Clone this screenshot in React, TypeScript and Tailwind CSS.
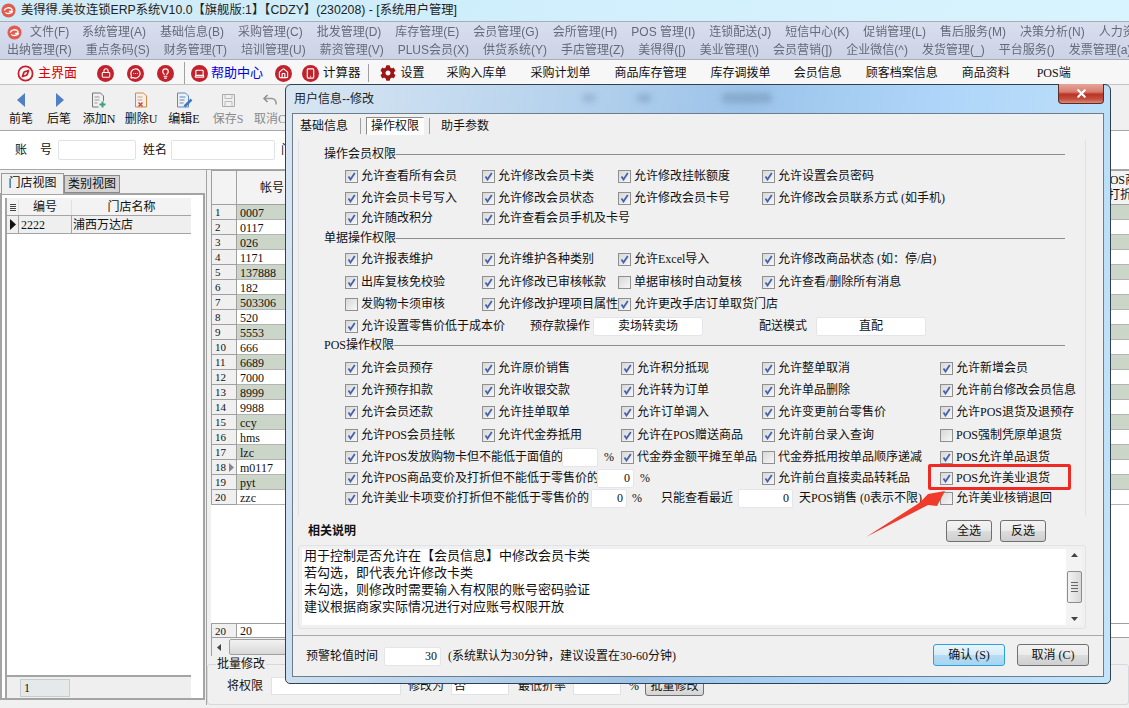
import { Compass, Lock, MessageCircleMore, Lightbulb, Laptop, House, Smartphone, X } from 'lucide-react'
import { FaCog } from 'react-icons/fa'
import type { ReactNode } from 'react'

const menuRow1 = ['系统管理(A)', '基础信息(B)', '采购管理(C)', '批发管理(D)', '库存管理(E)', '会员管理(G)', '会所管理(H)', 'POS 管理(I)', '连锁配送(J)', '短信中心(K)', '促销管理(L)', '售后服务(M)', '决策分析(N)', '人力资源(O)']
const menuRow2 = ['出纳管理(R)', '重点条码(S)', '财务管理(T)', '培训管理(U)', '薪资管理(V)', 'PLUS会员(X)', '供货系统(Y)', '手店管理(Z)', '美得得([)', '美业管理(\\)', '会员营销(])', '企业微信(^)', '发货管理(_)', '平台服务()', '发票管理(a)']
const accounts = ['0007', '0117', '026', '1171', '137888', '182', '503306', '520', '5553', '666', '6689', '7000', '8999', '9988', 'ccy', 'hms', 'lzc', 'm0117', 'pyt', 'zzc']

function Logo({ size = 16 }: { size?: number }) {
  return (
    <svg width={size} height={size} viewBox="0 0 16 16" className="shrink-0">
      <circle cx="8" cy="8" r="7.5" fill="#e25b4e" />
      <path d="M3.5 8c1-3 6-4 8-1.5 1 1.5-1 3-3 2.5M12.5 8.5c-1 3-6 3.5-8 1.5" stroke="#fff" strokeWidth="1.5" fill="none" />
    </svg>
  )
}

function RedIcon({ children, className }: { children: ReactNode; className?: string }) {
  return (
    <span className={`flex h-[17px] w-[17px] shrink-0 items-center justify-center rounded-full bg-[#c2222c] text-white ${className ?? ''}`}>
      {children}
    </span>
  )
}

function Tool({ label, icon, width, off }: { label: string; icon: ReactNode; width: string; off?: boolean }) {
  return (
    <div className={`flex flex-col items-center ${width} ${off ? 'text-[#8a8a8a]' : 'text-[#111]'}`}>
      <div className="flex h-[18px] items-center">{icon}</div>
      <span className="mt-[3px] text-[12px] leading-[14px]">{label}</span>
    </div>
  )
}

function Check({ on = true }: { on?: boolean }) {
  return (
    <span className="flex h-[13px] w-[13px] shrink-0 items-center justify-center border border-[#8e8f8f] bg-gradient-to-br from-[#d8d8d8] to-[#f7f7f7]">
      {on && (
        <svg width="9" height="9" viewBox="0 0 9 9">
          <path d="M1.5 4.5 L3.5 7.5 L7.8 1" stroke="#4661ad" strokeWidth="1.8" fill="none" />
        </svg>
      )}
    </span>
  )
}

function Opt({ label, on = true, w }: { label: string; on?: boolean; w: string }) {
  return (
    <div className={`flex shrink-0 items-center gap-[3px] whitespace-nowrap ${w}`}>
      <Check on={on} />
      <span>{label}</span>
    </div>
  )
}

function Field({ value = '', w, center }: { value?: string; w: string; center?: boolean }) {
  return (
    <div className={`flex h-[19px] shrink-0 items-center rounded-[2px] border border-[#e3e5ea] bg-white px-[3px] ${center ? 'justify-center' : 'justify-end'} ${w}`}>
      {value}
    </div>
  )
}

function Heading({ label, className }: { label: string; className?: string }) {
  return (
    <div className={`flex h-[20px] items-center pr-[20px] ${className ?? ''}`}>
      <span className="whitespace-nowrap">{label}</span>
      <span className="h-px flex-1 bg-[#8c8c8c]" />
    </div>
  )
}

function Row({ children, className }: { children: ReactNode; className?: string }) {
  return <div className={`flex h-[20px] items-center pl-[21px] ${className ?? ''}`}>{children}</div>
}

function WinButton({ label, w, primary }: { label: string; w: string; primary?: boolean }) {
  return (
    <button
      type="button"
      className={`flex h-[22px] items-center justify-center rounded-[3px] border ${w} ${
        primary
          ? 'border-[#2f9fe0] bg-[linear-gradient(#e8f5fc_0%,#d6edfa_48%,#b5dcf3_52%,#a6d5f0_100%)]'
          : 'border-[#707070] bg-[linear-gradient(#f3f3f3_0%,#ebebeb_48%,#dcdcdc_52%,#cfcfcf_100%)]'
      }`}
    >
      {label}
    </button>
  )
}

function Dialog() {
  return (
    <div className="absolute left-[285px] top-[84px] flex h-[600px] w-[826px] flex-col rounded-t-[6px] rounded-b-[5px] border border-[#33404e] bg-[linear-gradient(100deg,#d9e6f2_0%,#bcd6ee_25%,#9cc3e9_50%,#aed5f9_70%,#c3e4f9_100%)] px-[6px] pb-[6px] font-['Liberation_Serif','Noto_Sans_CJK_SC',serif] text-[12px] text-[#111]">
      <div className="relative h-[28px] shrink-0">
        <span className="absolute left-[2px] top-[6px] font-['Liberation_Sans','Noto_Sans_CJK_SC',sans-serif] text-[12px] leading-[16px] text-[#222]">用户信息--修改</span>
        <span className="absolute left-[430px] top-[8px] h-[10px] w-[50px] rounded bg-[#6f8fb0] opacity-50 blur-[3px]" />
        <span className="absolute left-[345px] top-[9px] h-[8px] w-[14px] rounded bg-[#6f8fb0] opacity-50 blur-[3px]" />
        <span className="absolute left-[290px] top-[9px] h-[8px] w-[14px] rounded bg-[#6f8fb0] opacity-40 blur-[3px]" />
        <div className="absolute right-0 top-[-1px] flex h-[20px] w-[46px] items-center justify-center rounded-b-[4px] border border-[#5b2b26] border-t-0 bg-[linear-gradient(#e5a69c_0%,#d97f70_40%,#b93426_55%,#c4503f_80%,#dc8a7c_100%)]">
          <X size={13} strokeWidth={4} className="text-white" />
        </div>
      </div>

      <div className="flex flex-1 flex-col border border-[#6e7d8a] bg-[#f0f0f0]">
        {/* tabs */}
        <div className="flex h-[25px] shrink-0 items-center pb-[2px] pl-[7px] text-[12px]">
          <span className="w-[48px]">基础信息</span>
          <span className="ml-[12px] h-[16px] w-px bg-[#a0a0a0]" />
          <span className="ml-[5px] flex h-[18px] w-[58px] items-center justify-center border border-[#8a8a8a] border-b-white border-r-white bg-white">操作权限</span>
          <span className="ml-[5px] h-[16px] w-px bg-[#a0a0a0]" />
          <span className="ml-[11px]">助手参数</span>
        </div>

        {/* permissions */}
        <div className="mx-[5px] flex h-[377px] w-[788px] shrink-0 flex-col whitespace-nowrap border-x border-[#dfe3e8] pl-[25px]">
          <Heading label="操作会员权限" className="mt-[5px]" />
          <Row className="mt-[2px]">
            <Opt w="w-[137px]" label="允许查看所有会员" />
            <Opt w="w-[136px]" label="允许修改会员卡类" />
            <Opt w="w-[144px]" label="允许修改挂帐额度" />
            <Opt w="w-[180px]" label="允许设置会员密码" />
          </Row>
          <Row className="mt-[2px]">
            <Opt w="w-[137px]" label="允许会员卡号写入" />
            <Opt w="w-[136px]" label="允许修改会员状态" />
            <Opt w="w-[144px]" label="允许修改会员卡号" />
            <Opt w="w-[240px]" label="允许修改会员联系方式 (如手机)" />
          </Row>
          <Row>
            <Opt w="w-[137px]" label="允许随改积分" />
            <Opt w="w-[136px]" label="允许查看会员手机及卡号" />
          </Row>
          <Heading label="单据操作权限" />
          <Row className="mt-px">
            <Opt w="w-[137px]" label="允许报表维护" />
            <Opt w="w-[136px]" label="允许维护各种类别" />
            <Opt w="w-[144px]" label="允许Excel导入" />
            <Opt w="w-[240px]" label="允许修改商品状态 (如：停/启)" />
          </Row>
          <Row className="mt-[3px]">
            <Opt w="w-[137px]" label="出库复核免校验" />
            <Opt w="w-[136px]" label="允许修改已审核帐款" />
            <Opt w="w-[144px]" on={false} label="单据审核时自动复核" />
            <Opt w="w-[240px]" label="允许查看/删除所有消息" />
          </Row>
          <Row className="mt-[2px]">
            <Opt w="w-[137px]" on={false} label="发购物卡须审核" />
            <Opt w="w-[136px]" label="允许修改护理项目属性" />
            <Opt w="w-[180px]" label="允许更改手店订单取货门店" />
          </Row>
          <Row className="mt-[2px]">
            <Opt w="w-[185px]" label="允许设置零售价低于成本价" />
            <span className="w-[63px]">预存款操作</span>
            <Field w="w-[110px]" value="卖场转卖场" center />
            <span className="ml-[56px] w-[57px]">配送模式</span>
            <Field w="w-[110px]" value="直配" center />
          </Row>
          <Heading label="POS操作权限" className="-mt-px" />
          <Row className="mt-[3px]">
            <Opt w="w-[137px]" label="允许会员预存" />
            <Opt w="w-[139px]" label="允许原价销售" />
            <Opt w="w-[141px]" label="允许积分抵现" />
            <Opt w="w-[178px]" label="允许整单取消" />
            <Opt w="w-[120px]" label="允许新增会员" />
          </Row>
          <Row className="mt-[2px]">
            <Opt w="w-[137px]" label="允许预存扣款" />
            <Opt w="w-[139px]" label="允许收银交款" />
            <Opt w="w-[141px]" label="允许转为订单" />
            <Opt w="w-[178px]" label="允许单品删除" />
            <Opt w="w-[120px]" label="允许前台修改会员信息" />
          </Row>
          <Row className="mt-[2px]">
            <Opt w="w-[137px]" label="允许会员还款" />
            <Opt w="w-[139px]" label="允许挂单取单" />
            <Opt w="w-[141px]" label="允许订单调入" />
            <Opt w="w-[178px]" label="允许变更前台零售价" />
            <Opt w="w-[120px]" label="允许POS退货及退预存" />
          </Row>
          <Row className="mt-[3px]">
            <Opt w="w-[137px]" label="允许POS会员挂帐" />
            <Opt w="w-[139px]" label="允许代金券抵用" />
            <Opt w="w-[141px]" label="允许在POS赠送商品" />
            <Opt w="w-[178px]" label="允许前台录入查询" />
            <Opt w="w-[120px]" on={false} label="POS强制凭原单退货" />
          </Row>
          <Row className="mt-[2px]">
            <Opt w="w-[217px]" label="允许POS发放购物卡但不能低于面值的" />
            <Field w="w-[36px]" />
            <span className="ml-[6px] w-[17px]">%</span>
            <Opt w="w-[141px]" label="代金券金额平摊至单品" />
            <Opt w="w-[178px]" on={false} label="代金券抵用按单品顺序递减" />
            <Opt w="w-[120px]" label="POS允许单品退货" />
          </Row>
          <Row className="mt-px">
            <Opt w="w-[252px]" label="允许POS商品变价及打折但不能低于零售价的" />
            <Field w="w-[37px]" value="0" />
            <span className="ml-[6px] w-[122px]">%</span>
            <Opt w="w-[178px]" label="允许前台直接卖品转耗品" />
            <Opt w="w-[120px]" label="POS允许美业退货" />
          </Row>
          <Row>
            <Opt w="w-[246px]" label="允许美业卡项变价打折但不能低于零售价的" />
            <Field w="w-[36px]" value="0" />
            <span className="ml-[5px] w-[29px]">%</span>
            <span className="w-[77px]">只能查看最近</span>
            <Field w="w-[55px]" value="0" />
            <span className="ml-[6px] w-[141px]">天POS销售 (0表示不限)</span>
            <Opt w="w-[120px]" on={false} label="允许美业核销退回" />
          </Row>
        </div>

        {/* description */}
        <div className="flex h-[29px] shrink-0 items-center pl-[15px] pr-[57px]">
          <span className="flex-1 font-bold">相关说明</span>
          <WinButton label="全选" w="w-[46px]" />
          <WinButton label="反选" w="ml-[8px] w-[46px]" />
        </div>
        <div className="mx-[5px] flex h-[84px] w-[788px] shrink-0 rounded-[3px] border border-[#dfe3e8] p-[3px]">
          <div className="flex-1 bg-white pl-[2px] text-[13px] leading-[17px]">
            <div className="-mt-[2px]">
              <p>用于控制是否允许在【会员信息】中修改会员卡类</p>
              <p>若勾选，即代表允许修改卡类</p>
              <p>未勾选，则修改时需要输入有权限的账号密码验证</p>
              <p>建议根据商家实际情况进行对应账号权限开放</p>
            </div>
          </div>
          <div className="flex w-[16px] flex-col items-center justify-between bg-[#f3f3f3] py-[4px]">
            <svg width="7" height="4" viewBox="0 0 7 4"><path d="M3.5 0 L7 4 L0 4Z" fill="#444" /></svg>
            <div className="flex h-[32px] w-[15px] flex-col items-center justify-center gap-[2px] rounded-[2px] border border-[#8d8d8d] bg-gradient-to-r from-[#f2f2f2] to-[#d8d8d8]">
              <span className="h-px w-[7px] bg-[#666]" />
              <span className="h-px w-[7px] bg-[#666]" />
              <span className="h-px w-[7px] bg-[#666]" />
              <span className="h-px w-[7px] bg-[#666]" />
            </div>
            <svg width="7" height="4" viewBox="0 0 7 4"><path d="M0 0 L7 0 L3.5 4Z" fill="#444" /></svg>
          </div>
        </div>

        {/* footer */}
        <div className="mt-[6px] flex flex-1 items-center border-t border-[#a8a8a8] pl-[13px] pr-[14px]">
          <span className="w-[78px]">预警轮值时间</span>
          <Field w="w-[57px]" value="30" />
          <span className="ml-[7px] flex-1">(系统默认为30分钟，建议设置在30-60分钟)</span>
          <WinButton label="确认 (S)" w="-mt-[2px] w-[72px]" primary />
          <WinButton label="取消 (C)" w="-mt-[2px] ml-[12px] w-[72px]" />
        </div>
      </div>
    </div>
  )
}

export default function App() {
  return (
    <div className="relative flex h-[708px] w-[1129px] flex-col overflow-hidden bg-[#f0f0f0] font-['Liberation_Serif','Noto_Sans_CJK_SC',serif] text-[12px] text-[#111]">
      {/* title bar */}
      <div className="flex h-[21px] shrink-0 items-center gap-[5px] bg-[linear-gradient(100deg,#d2eaf6_0%,#cfeefc_40%,#d4f1fd_70%,#d8f4fe_100%)] pl-px font-['Liberation_Sans','Noto_Sans_CJK_SC',sans-serif] text-[#222]">
        <Logo size={15} />
        <span className="whitespace-nowrap text-[12.3px]">美得得.美妆连锁ERP系统V10.0【旗舰版:1】【CDZY】(230208) - [系统用户管理]</span>
      </div>

      {/* menu */}
      <div className="flex h-[39px] shrink-0 flex-col overflow-hidden border-y border-[#a8aeb8] bg-[linear-gradient(#d9deef,#ccd3e6)] pt-px font-['Liberation_Sans','Noto_Sans_CJK_SC',sans-serif] text-[#666a78]">
        <div className="flex h-[18px] items-center whitespace-nowrap pl-[7px]">
          <Logo size={15} />
          <span className="ml-[8px] w-[52px] shrink-0 blur-[0.3px]">文件(F)</span>
          {menuRow1.map(m => (
            <span key={m} className="mr-[14px] shrink-0 blur-[0.3px]">{m}</span>
          ))}
        </div>
        <div className="flex h-[18px] items-center gap-[14px] whitespace-nowrap pl-[7px]">
          {menuRow2.map(m => (
            <span key={m} className="shrink-0 blur-[0.3px]">{m}</span>
          ))}
        </div>
      </div>

      {/* shortcut bar */}
      <div className="flex h-[25px] shrink-0 items-center whitespace-nowrap border-b border-[#c4c4c4] bg-[#f7f7f7] pt-[2px]">
        <Compass size={17} strokeWidth={2.5} className="ml-[17px] text-[#c2222c]" />
        <span className="ml-[4px] text-[13px] text-[#e00000]">主界面</span>
        <RedIcon className="ml-[20px]"><Lock size={10} strokeWidth={2.5} /></RedIcon>
        <RedIcon className="ml-[13px]"><MessageCircleMore size={11} strokeWidth={2.5} /></RedIcon>
        <RedIcon className="ml-[13px]"><Lightbulb size={11} strokeWidth={2.5} /></RedIcon>
        <span className="ml-[10px] h-[22px] w-px bg-[#a0a0a0]" />
        <RedIcon className="ml-[6px]"><Laptop size={11} strokeWidth={2.5} /></RedIcon>
        <span className="ml-[3px] text-[13px] text-[#0000e6]">帮助中心</span>
        <RedIcon className="ml-[12px]"><House size={11} strokeWidth={2.5} /></RedIcon>
        <RedIcon className="ml-[10px]"><Smartphone size={11} strokeWidth={2.5} /></RedIcon>
        <span className="ml-[4px] text-[12.5px]">计算器</span>
        <span className="ml-[7px] h-[18px] w-px bg-[#a0a0a0]" />
        <FaCog size={16} className="ml-[11px] text-[#9c1616]" />
        <span className="ml-[5px]">设置</span>
        <span className="ml-[22px]">采购入库单</span>
        <span className="ml-[24px]">采购计划单</span>
        <span className="ml-[24px]">商品库存管理</span>
        <span className="ml-[24px]">库存调拨单</span>
        <span className="ml-[23px]">会员信息</span>
        <span className="ml-[24px]">顾客档案信息</span>
        <span className="ml-[24px]">商品资料</span>
        <span className="ml-[27px]">POS端</span>
      </div>

      {/* record toolbar */}
      <div className="flex h-[45px] shrink-0 items-start pt-[6px]">
        <Tool width="ml-px w-[40px]" label="前笔" icon={<svg width="9" height="14" viewBox="0 0 9 14"><path d="M8 0 L0 7 L8 14Z" fill="#4f7fc4" /></svg>} />
        <Tool width="w-[36px]" label="后笔" icon={<svg width="9" height="14" viewBox="0 0 9 14"><path d="M1 0 L9 7 L1 14Z" fill="#4f7fc4" /></svg>} />
        <Tool width="w-[44px]" label="添加N" icon={
          <svg width="16" height="17" viewBox="0 0 16 17" fill="none">
            <path d="M1.5 1h8l3 3v5M1.5 1v14h6" stroke="#777" />
            <path d="M3.5 5h5M3.5 8h5M3.5 11h3" stroke="#999" />
            <path d="M11.5 9.5v6M8.5 12.5h6" stroke="#3f9e7c" strokeWidth="2" />
          </svg>
        } />
        <Tool width="w-[40px]" label="删除U" icon={
          <svg width="15" height="17" viewBox="0 0 15 17" fill="none">
            <path d="M1.5 1h8l3 3v11h-11z" stroke="#d9883c" />
            <path d="M3.5 5h5M3.5 8h5" stroke="#d9a070" />
            <path d="M4.5 10.5l4 4M8.5 10.5l-4 4" stroke="#d8352a" strokeWidth="1.3" />
          </svg>
        } />
        <Tool width="w-[46px]" label="编辑E" icon={
          <svg width="17" height="17" viewBox="0 0 17 17" fill="none">
            <path d="M1.5 1h8l3 3v11h-11z" stroke="#5a8ac6" />
            <path d="M3.5 5h6M3.5 8h5M3.5 11h4" stroke="#5a8ac6" />
            <path d="M8.5 14.5l7-7" stroke="#3f78c0" strokeWidth="2.5" />
          </svg>
        } />
        <Tool width="w-[42px]" off label="保存S" icon={
          <svg width="15" height="15" viewBox="0 0 15 15" fill="none">
            <path d="M1.5 1.5h12v12h-12z" stroke="#aaa" />
            <path d="M4 1.5v4h7v-4M4 13.5v-5h7v5" stroke="#bbb" />
          </svg>
        } />
        <Tool width="w-[42px]" off label="取消C" icon={
          <svg width="15" height="13" viewBox="0 0 15 13" fill="none">
            <path d="M4.5 1L1 4.5 4.5 8" stroke="#888" strokeWidth="1.5" />
            <path d="M1.5 4.5h7c3 0 5 2 4.5 6" stroke="#999" strokeWidth="1.5" />
          </svg>
        } />
      </div>

      {/* search row */}
      <div className="flex h-[40px] shrink-0 items-center whitespace-nowrap border-y border-[#a8a8a8] bg-white">
        <span className="ml-[15px] flex w-[37px] justify-between"><span>账</span><span>号</span></span>
        <div className="ml-[6px] h-[20px] w-[78px] rounded-[2px] border border-[#dfe3e8]" />
        <span className="ml-[7px] w-[28px]">姓名</span>
        <div className="h-[20px] w-[104px] rounded-[2px] border border-[#dfe3e8]" />
        <span className="ml-[6px]">门店</span>
      </div>

      {/* body */}
      <div className="flex min-h-0 flex-1 border-b-[3px] border-[#f0f0f0]">
        {/* store panel */}
        <div className="flex w-[205px] shrink-0 flex-col">
          <div className="flex h-[23px] shrink-0 items-end pl-px">
            <span className="z-10 -mb-px flex h-[21px] w-[63px] items-center justify-center border border-b-0 border-[#9a9a9a] bg-[#f0f0f0] pb-[2px]">门店视图</span>
            <span className="flex h-[18px] w-[56px] items-center justify-center border border-[#8a8a8a] bg-[#d4d4d4]">类别视图</span>
          </div>
          <div className="mb-[5px] flex flex-1 flex-col border-2 border-[#a4a4a4] bg-white pl-[3px] pt-[3px]">
            <div className="flex h-[17px] w-[186px] shrink-0 border-l-2 border-[#a4a4a4] bg-[#f3f3f3] pt-[2px] text-center leading-[15px]">
              <span className="flex w-[11px] flex-col items-center justify-center gap-px">
                <i className="h-px w-[6px] bg-[#444]" />
                <i className="h-px w-[6px] bg-[#444]" />
                <i className="h-px w-[6px] bg-[#444]" />
                <i className="h-px w-[6px] bg-[#444]" />
              </span>
              <span className="w-[53px] border-l border-[#e0e0e0]">编号</span>
              <span className="flex-1 border-l border-[#e0e0e0]">门店名称</span>
            </div>
            <div className="flex h-[19px] w-[186px] shrink-0 items-center border-b border-l-2 border-t border-[#a4a4a4] bg-[#efefef] text-[12px]">
              <span className="flex w-[11px] justify-center">
                <svg width="6" height="11" viewBox="0 0 6 11"><path d="M0 0 L6 5.5 L0 11Z" fill="#111" /></svg>
              </span>
              <span className="flex h-full w-[53px] items-center border-l border-[#a4a4a4] pl-[2px]">2222</span>
              <span className="flex h-full flex-1 items-center border-l border-[#a4a4a4] pl-px">浦西万达店</span>
            </div>
            <div className="w-[186px] flex-1 border-l-2 border-[#a4a4a4]" />
            <div className="flex h-[23px] w-[186px] shrink-0 items-center border-l-2 border-t-2 border-[#a4a4a4] bg-[#efefef] pl-[13px]">
              <span className="flex h-[18px] w-[50px] items-center border border-[#c8cccc] bg-[#e6e9e9] pl-[3px]">1</span>
            </div>
          </div>
        </div>

        {/* splitter */}
        <div className="flex w-[6px] shrink-0 justify-start pl-px">
          <span className="w-px bg-[#a4a4a4]" />
        </div>

        {/* user grid */}
        <div className="flex min-w-0 flex-1 flex-col bg-white">
          <div className="flex h-[35px] shrink-0 border-b border-t border-[#a0a0a0] bg-[#f3f3f3]">
            <span className="w-[26px] border-l border-r border-[#a0a0a0]" />
            <span className="flex w-[60px] items-center justify-center pl-[10px]">帐号</span>
            <span className="flex-1" />
            <span className="flex w-[18px] flex-col items-center justify-center whitespace-nowrap leading-[15px]">
              <span>POS商</span>
              <span>打折</span>
            </span>
          </div>
          {accounts.map((a, i) => (
            <div key={a} className={`flex h-[15px] shrink-0 leading-[16px] ${i % 2 === 0 ? 'bg-[#cbd6c8]' : 'bg-white'}`}>
              <span className="flex w-[26px] items-center border-b border-l border-r border-[#a0a0a0] bg-[#f0f0f0] pl-[3px] text-[11px]">
                {i + 1}
                {a === 'm0117' && (
                  <svg width="5" height="9" viewBox="0 0 5 9" className="ml-[3px]"><path d="M0 0 L5 4.5 L0 9Z" fill="#888" /></svg>
                )}
              </span>
              <span className="flex-1 border-b border-[#b4b4b4] pl-[3px]">{a}</span>
            </div>
          ))}
          <div className="flex-1" />
          <div className="flex h-[15px] shrink-0 border-y border-[#a0a0a0] leading-[14px]">
            <span className="w-[26px] border-x border-[#a0a0a0] bg-[#f0f0f0] pl-[3px] text-[11px]">20</span>
            <span className="pl-[3px]">20</span>
          </div>
          <div className="flex h-[18px] shrink-0 items-center border-l border-[#a0a0a0] bg-[#f0f0f0] pl-[5px]">
            <svg width="4" height="7" viewBox="0 0 4 7"><path d="M4 0 L0 3.5 L4 7Z" fill="#444" /></svg>
            <span className="ml-[8px] h-[16px] w-[170px] rounded-[2px] border border-[#a0a0a0] bg-[linear-gradient(#f2f2f2,#d8d8d8)]" />
          </div>
          <div className="h-[49px] shrink-0 bg-[#f0f0f0] pt-[8px]">
            <div className="-ml-[4px] h-[41px] rounded-[3px] border border-[#d5d8dc] pl-[19px]">
              <span className="-mt-[8px] ml-[-11px] block w-fit bg-[#f0f0f0] px-px leading-[14px]">批量修改</span>
              <div className="mt-[5px] flex h-[19px] items-center whitespace-nowrap">
                <span className="w-[44px]">将权限</span>
                <div className="h-[18px] w-[130px] border border-[#dfe3e8] bg-white" />
                <span className="ml-[7px] w-[43px]">修改为</span>
                <div className="flex h-[18px] w-[58px] items-center border border-[#dfe3e8] bg-white pl-[2px]">否</div>
                <span className="ml-[9px] w-[55px]">最低折率</span>
                <div className="h-[18px] w-[48px] border border-[#dfe3e8] bg-white" />
                <span className="ml-[8px] w-[16px]">%</span>
                <span className="flex h-[20px] w-[59px] items-center justify-center rounded-[3px] border border-[#707070] bg-[linear-gradient(#f3f3f3,#d4d4d4)]">批量修改</span>
              </div>
            </div>
          </div>
        </div>
      </div>

      <Dialog />

      {/* callout marks drawn over the shot */}
      <div className="absolute left-[928px] top-[464px] h-[26px] w-[143px] rounded-[2px] border-[3px] border-[#ee2a24]" />
      <svg width="90" height="60" viewBox="0 0 90 60" className="absolute left-[860px] top-[485px]">
        <path d="M6 52 L60 17.5 L68 9 L85 6 L77 21 L68 20 Z" fill="#ef3a2c" />
      </svg>
    </div>
  )
}
